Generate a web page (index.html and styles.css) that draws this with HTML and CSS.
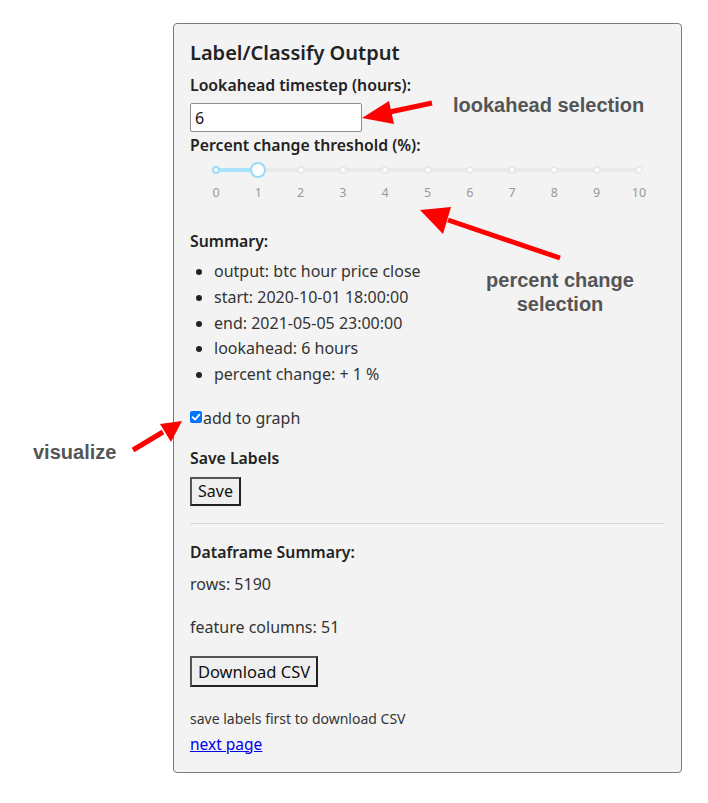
FILE: index.html
```html
<!DOCTYPE html>
<html>
<head>
<meta charset="utf-8">
<link rel="stylesheet" href="styles.css">
</head>
<body>
<div class="page">
  <div class="panel">
    <h2 class="title">Label/Classify Output</h2>
    <div class="label label-first">Lookahead timestep (hours):</div>
    <input class="num-input" type="text" value="6">
    <div class="label label-second">Percent change threshold (%):</div>
    <div class="slider">
      <div class="rail">
        <div class="track-fill"></div>
        <span class="dot active" style="left:0%"></span>
        <span class="dot active" style="left:10%"></span>
        <span class="dot" style="left:20%"></span>
        <span class="dot" style="left:30%"></span>
        <span class="dot" style="left:40%"></span>
        <span class="dot" style="left:50%"></span>
        <span class="dot" style="left:60%"></span>
        <span class="dot" style="left:70%"></span>
        <span class="dot" style="left:80%"></span>
        <span class="dot" style="left:90%"></span>
        <span class="dot" style="left:100%"></span>
        <span class="handle" style="left:10%"></span>
      </div>
      <div class="marks">
        <span style="left:0%">0</span>
        <span style="left:10%">1</span>
        <span style="left:20%">2</span>
        <span style="left:30%">3</span>
        <span style="left:40%">4</span>
        <span style="left:50%">5</span>
        <span style="left:60%">6</span>
        <span style="left:70%">7</span>
        <span style="left:80%">8</span>
        <span style="left:90%">9</span>
        <span style="left:100%">10</span>
      </div>
    </div>
    <div class="label">Summary:</div>
    <ul class="summary">
      <li>output: btc hour price close</li>
      <li>start: 2020-10-01 18:00:00</li>
      <li>end: 2021-05-05 23:00:00</li>
      <li>lookahead: 6 hours</li>
      <li>percent change: + 1 %</li>
    </ul>
    <label class="check-row"><span class="checkbox"><svg viewBox="0 0 12 12" width="12" height="12"><path d="M2.6 6.2 L5 8.6 L9.4 3.6" fill="none" stroke="#fff" stroke-width="1.8" stroke-linecap="round" stroke-linejoin="round"/></svg></span>add to graph</label>
    <div class="label save-labels">Save Labels</div>
    <button class="btn btn-save">Save</button>
    <hr class="divider">
    <div class="label df-title">Dataframe Summary:</div>
    <div class="text rows">rows: 5190</div>
    <div class="text cols">feature columns: 51</div>
    <button class="btn btn-csv">Download CSV</button>
    <div class="note">save labels first to download CSV</div>
    <a class="link" href="#">next page</a>
  </div>

  <div class="annot annot-look">lookahead selection</div>
  <div class="annot annot-pct">percent change<br>selection</div>
  <div class="annot annot-vis">visualize</div>
  <svg class="arrows" width="708" height="803" viewBox="0 0 708 803">
    <g fill="#ff0000" stroke="#ff0000">
      <line x1="432" y1="103" x2="385" y2="113" stroke-width="5"/>
      <polygon points="362,118 389,101 394,124" stroke="none"/>
      <line x1="560" y1="258" x2="448" y2="220" stroke-width="5"/>
      <polygon points="420,210 451,207 443,234" stroke="none"/>
      <line x1="133" y1="450" x2="163" y2="432" stroke-width="5"/>
      <polygon points="182,421 160,424 171,442" stroke="none"/>
    </g>
  </svg>
</div>
</body>
</html>
```
FILE: styles.css
```css
html, body {
  margin: 0;
  padding: 0;
  background: #ffffff;
}
.page {
  position: relative;
  width: 708px;
  height: 803px;
  font-family: "Noto Sans", "Open Sans", sans-serif;
  color: #333;
}
.panel {
  position: relative;
  margin-left: 173px;
  top: 23px;
  width: 474px;
  height: 721px;
  padding: 14px 17px 13px 16px;
  background: #f3f3f3;
  border: 1px solid #7a7a7a;
  border-radius: 4px;
  display: flex;
  flex-direction: column;
  align-items: flex-start;
}
.title {
  margin: 0;
  font-size: 20px;
  line-height: 30px;
  font-weight: 600;
  color: #222;
}
.label {
  font-size: 15.8px;
  line-height: 22px;
  font-weight: 600;
  color: #222;
}
.label-first { margin-top: 6px; }
.num-input {
  margin-top: 7px;
  box-sizing: border-box;
  width: 172px;
  height: 29px;
  border: 1px solid #8f8f8f;
  border-radius: 2px;
  background: #fff;
  font-family: "Noto Sans", sans-serif;
  font-size: 16px;
  color: #111;
  padding: 0 4px;
  outline: none;
}
.label-second { margin-top: 2px; }
.slider {
  position: relative;
  width: 423px;
  height: 74px;
  margin-left: 26px;
}
.rail {
  position: relative;
  margin-top: 12px;
  height: 4px;
  background: #e9e9e9;
  border-radius: 2px;
}
.track-fill {
  position: absolute;
  left: 0;
  top: 0;
  height: 4px;
  width: 10%;
  background: #abe2fb;
  border-radius: 2px;
}
.dot {
  position: absolute;
  top: -2px;
  width: 8px;
  height: 8px;
  margin-left: -4px;
  box-sizing: border-box;
  border: 2px solid #e9e9e9;
  background: #fff;
  border-radius: 50%;
}
.dot.active { border-color: #96dbfa; }
.handle {
  position: absolute;
  top: -6px;
  width: 16px;
  height: 16px;
  margin-left: -8px;
  box-sizing: border-box;
  border: 2px solid #96dbfa;
  background: #fff;
  border-radius: 50%;
}
.marks {
  position: relative;
  margin-top: 12px;
  height: 18px;
}
.marks span {
  position: absolute;
  top: 0;
  transform: translateX(-50%);
  font-size: 12.5px;
  line-height: 18px;
  color: #999;
}
.summary {
  margin: 7px 0 0 0;
  padding-left: 24px;
  font-size: 16px;
  line-height: 25.75px;
  color: #333;
}
.summary li::marker { color: #222; }
.check-row {
  margin-top: 19px;
  display: flex;
  align-items: center;
  font-size: 16px;
  line-height: 22px;
  color: #333;
}
.checkbox {
  display: inline-flex;
  width: 12px;
  height: 12px;
  background: #0075ff;
  border-radius: 2px;
  margin-right: 1px;
  margin-top: -1px;
}
.save-labels { margin-top: 18px; }
.btn {
  box-sizing: border-box;
  background: #efefef;
  border: 2px solid;
  border-color: #555 #222 #222 #555;
  border-radius: 0;
  font-family: "Noto Sans", sans-serif;
  font-size: 16px;
  color: #111;
  padding: 0 4px;
}
.btn-save {
  margin-top: 8px;
  width: 51px;
  height: 29px;
}
.divider {
  align-self: stretch;
  margin: 17px 0 0 0;
  border: 0;
  border-top: 1px solid #d9d9d9;
  height: 0;
}
.df-title { margin-top: 17px; }
.text {
  font-size: 16px;
  line-height: 22px;
  color: #333;
}
.rows { margin-top: 10px; }
.cols { margin-top: 21px; }
.btn-csv {
  margin-top: 18px;
  width: 128px;
  height: 31px;
  font-size: 16.5px;
}
.note {
  margin-top: 22px;
  font-size: 14px;
  line-height: 20px;
  color: #333;
}
.link {
  margin-top: 5px;
  font-size: 15.5px;
  line-height: 20px;
  color: #0000ee;
}
.annot {
  position: absolute;
  font-family: "Liberation Sans", Arial, sans-serif;
  font-weight: 700;
  font-size: 20px;
  color: #555;
  line-height: 24px;
}
.annot-look { left: 453px; top: 93px; }
.annot-pct { left: 480px; top: 268px; text-align: center; width: 160px; }
.annot-vis { left: 33px; top: 440px; }
.arrows {
  position: absolute;
  left: 0;
  top: 0;
  pointer-events: none;
}
```
